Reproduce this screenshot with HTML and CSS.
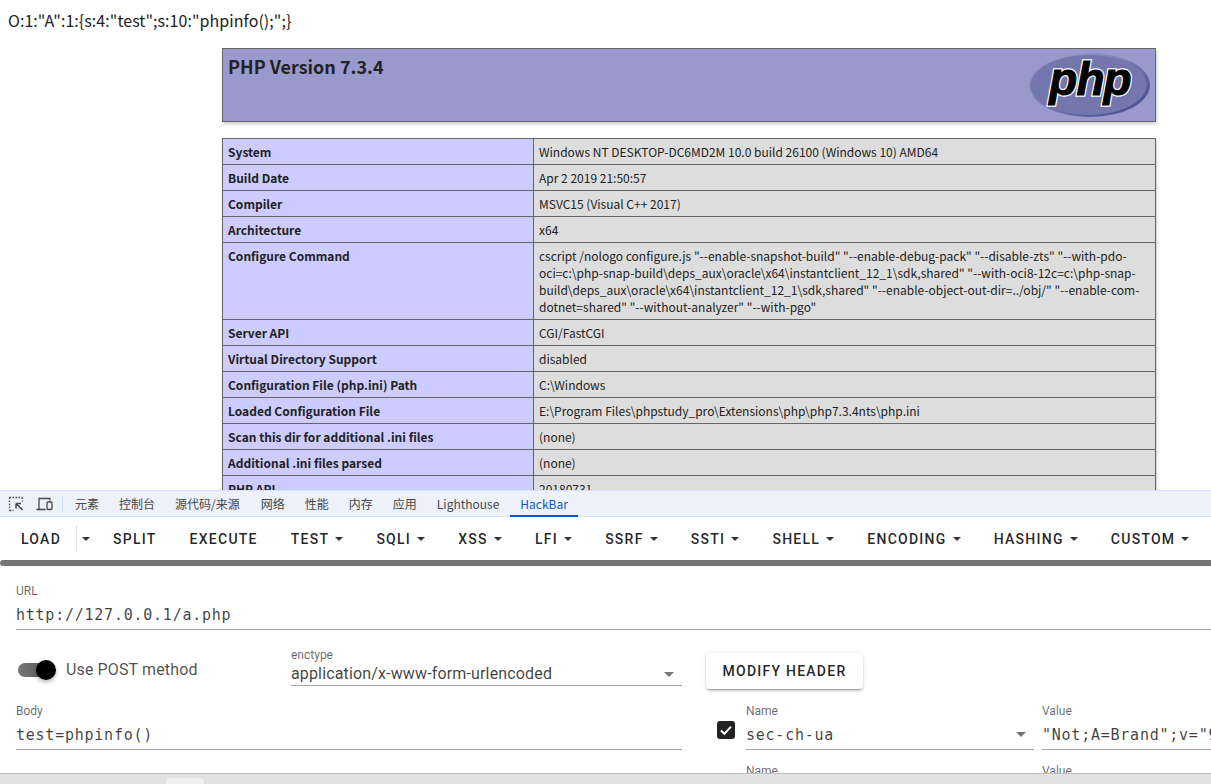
FILE: index.html
```html
<!DOCTYPE html>
<html lang="en">
<head>
  <meta charset="UTF-8" />
  <title>a.php</title>
  <link rel="stylesheet" href="styles.css">
</head>
<body>
  <div class="page">
    <div class="output">O:1:"A":1:{s:4:"test";s:10:"phpinfo();";}</div>
    <div class="phpinfo">
      <div class="php-head">
        <h1>PHP Version 7.3.4</h1>
        <svg class="php-logo" width="121" height="64" viewBox="0 0 121 64">
          <defs>
            <linearGradient id="oval" x1="0" y1="0" x2="1" y2="1">
              <stop offset="0" stop-color="#a3a6ce"/>
              <stop offset="0.5" stop-color="#7478b0"/>
              <stop offset="1" stop-color="#3f4288"/>
            </linearGradient>
          </defs>
          <ellipse cx="60.5" cy="32" rx="60.5" ry="32" fill="url(#oval)"/>
          <ellipse cx="59.5" cy="32" rx="58" ry="30" fill="#7377ae"/>
          <text class="php-word php-edge" x="61" y="42">php</text>
          <text class="php-word" x="61" y="42">php</text>
        </svg>
      </div>
      <table class="info">
        <tr><th>System</th><td>Windows NT DESKTOP-DC6MD2M 10.0 build 26100 (Windows 10) AMD64</td></tr>
        <tr><th>Build Date</th><td>Apr 2 2019 21:50:57</td></tr>
        <tr><th>Compiler</th><td>MSVC15 (Visual C++ 2017)</td></tr>
        <tr><th>Architecture</th><td>x64</td></tr>
        <tr class="tall"><th>Configure Command</th><td>cscript /nologo configure.js "--enable-snapshot-build" "--enable-debug-pack" "--disable-zts" "--with-pdo-oci=c:\php-snap-build\deps_aux\oracle\x64\instantclient_12_1\sdk,shared" "--with-oci8-12c=c:\php-snap-build\deps_aux\oracle\x64\instantclient_12_1\sdk,shared" "--enable-object-out-dir=../obj/" "--enable-com-dotnet=shared" "--without-analyzer" "--with-pgo"</td></tr>
        <tr><th>Server API</th><td>CGI/FastCGI</td></tr>
        <tr><th>Virtual Directory Support</th><td>disabled</td></tr>
        <tr><th>Configuration File (php.ini) Path</th><td>C:\Windows</td></tr>
        <tr><th>Loaded Configuration File</th><td>E:\Program Files\phpstudy_pro\Extensions\php\php7.3.4nts\php.ini</td></tr>
        <tr><th>Scan this dir for additional .ini files</th><td>(none)</td></tr>
        <tr><th>Additional .ini files parsed</th><td>(none)</td></tr>
        <tr><th>PHP API</th><td>20180731</td></tr>
      </table>
    </div>
  </div>

  <div class="devtools">
    <div class="tabs">
      <svg class="tool-icon" width="16" height="16" viewBox="0 0 16 16" fill="none" stroke="#474747" stroke-width="1.3">
        <path d="M1.5 1.5h13M1.5 1.5v13M14.5 1.5v4M1.5 14.5h4" stroke-dasharray="1.6 1.4"/>
        <path d="M8 7.5h5M8 7.5v5M8 7.5l6.5 6.5" stroke-width="1.5"/>
      </svg>
      <svg class="tool-icon" width="17" height="16" viewBox="0 0 17 16" fill="none" stroke="#474747" stroke-width="1.3">
        <path d="M3 13V2.5h11v2"/>
        <path d="M0.5 13.5h9" stroke-width="1.6"/>
        <rect x="11" y="6" width="5" height="7.5" rx="1"/>
      </svg>
      <span class="tab-sep"></span>
      <span class="tab">元素</span>
      <span class="tab">控制台</span>
      <span class="tab wide">源代码/来源</span>
      <span class="tab">网络</span>
      <span class="tab">性能</span>
      <span class="tab">内存</span>
      <span class="tab">应用</span>
      <span class="tab last">Lighthouse</span>
      <span class="tab active">HackBar</span>
    </div>

    <div class="toolbar">
      <span class="btn">Load</span>
      <span class="btn-split"><i class="caret"></i></span>
      <span class="btn">Split</span>
      <span class="btn">Execute</span>
      <span class="btn menu">Test<i class="caret"></i></span>
      <span class="btn menu">SQLi<i class="caret"></i></span>
      <span class="btn menu">XSS<i class="caret"></i></span>
      <span class="btn menu">LFI<i class="caret"></i></span>
      <span class="btn menu">SSRF<i class="caret"></i></span>
      <span class="btn menu">SSTI<i class="caret"></i></span>
      <span class="btn menu">Shell<i class="caret"></i></span>
      <span class="btn menu">Encoding<i class="caret"></i></span>
      <span class="btn menu">Hashing<i class="caret"></i></span>
      <span class="btn menu">Custom<i class="caret"></i></span>
    </div>
    <div class="resizer"></div>

    <div class="form">
      <div class="field url-field">
        <label>URL</label>
        <div class="value mono">http://127.0.0.1/a.php</div>
      </div>

      <div class="form-row">
        <div class="left-col">
          <div class="post-row">
            <div class="switch"><span class="thumb"></span></div>
            <span class="switch-label">Use POST method</span>
            <div class="field enctype">
              <label>enctype</label>
              <div class="value">application/x-www-form-urlencoded<i class="caret grey"></i></div>
            </div>
          </div>
          <div class="field body-field">
            <label>Body</label>
            <div class="value mono">test=phpinfo()</div>
          </div>
        </div>

        <div class="right-col">
          <button class="modify">Modify Header</button>
          <div class="header-row">
            <span class="checkbox">
              <svg width="18" height="18" viewBox="0 0 18 18" fill="none" stroke="#fff" stroke-width="2"><path d="M4 9.5l3.4 3.4L14 5.6"/></svg>
            </span>
            <div class="field name">
              <label>Name</label>
              <div class="value mono">sec-ch-ua<i class="caret grey"></i></div>
            </div>
            <div class="field val">
              <label>Value</label>
              <div class="value mono">"Not;A=Brand";v="99", "Google Chrome";v="139"</div>
            </div>
          </div>
          <div class="header-row next">
            <div class="field name">
              <label>Name</label>
            </div>
            <div class="field val">
              <label>Value</label>
            </div>
          </div>
        </div>
      </div>
    </div>
  </div>

  <div class="tabstrip"><span class="strip-tab"></span></div>
</body>
</html>
```

FILE: styles.css
```css
* { box-sizing: border-box; }
html, body {
  margin: 0;
  padding: 0;
  height: 784px;
  overflow: hidden;
  background: #fff;
}
body {
  display: flex;
  flex-direction: column;
  font-family: Roboto, sans-serif;
}

/* page above the devtools */
.page {
  height: 490px;
  flex: none;
  overflow: hidden;
  padding: 9px 0 0 8px;
  font-family: "Noto Sans CJK SC", "Noto Sans", sans-serif;
  color: #222;
}
.output {
  font-size: 16px;
  line-height: 23px;
  letter-spacing: 0.05px;
}
.phpinfo {
  width: 934px;
  margin: 16px 0 0 214px;
}
.php-head {
  height: 74px;
  background: #99c;
  border: 1px solid #666;
  box-shadow: 1px 2px 3px #ccc;
  padding: 0 5px;
  display: flex;
  justify-content: space-between;
  align-items: flex-start;
}
.php-head h1 {
  margin: 4px 0 0;
  font-size: 18px;
  line-height: 26px;
  font-weight: 700;
}
.php-logo {
  margin: 4px 0 0;
}
.php-word {
  font-family: "Liberation Sans", sans-serif;
  font-size: 46px;
  font-weight: 700;
  font-style: italic;
  letter-spacing: -1px;
  text-anchor: middle;
  fill: #000;
  stroke: #000;
  stroke-width: 1px;
}
.php-edge {
  stroke: #fff;
  stroke-width: 3.5px;
}
.info {
  width: 934px;
  margin-top: 16px;
  border-collapse: collapse;
  table-layout: fixed;
  font-size: 12px;
  box-shadow: 1px 2px 3px #ccc;
}
.info th, .info td {
  border: 1px solid #666;
  padding: 4px 5px;
  height: 26px;
  line-height: 17px;
  text-align: left;
  vertical-align: baseline;
  word-break: break-word;
}
.info th {
  width: 311px;
  background: #ccf;
  font-weight: 700;
}
.info td {
  background: #ddd;
}
.info .tall th, .info .tall td {
  height: 77px;
}

/* devtools tab strip */
.devtools {
  height: 283px;
  overflow: hidden;
  background: #fff;
  flex: none;
}
.tabs {
  height: 27px;
  background: #edf1fa;
  border-top: 1px solid #d3e3fd;
  border-bottom: 1px solid #d3e3fd;
  display: flex;
  align-items: center;
  padding-left: 8px;
  font-family: "Noto Sans CJK SC", sans-serif;
  font-size: 12px;
  color: #474747;
}
.tool-icon {
  margin-right: 12px;
}
.tab-sep {
  width: 1px;
  height: 16px;
  background: #d3e3fd;
  margin: 0 4px 0 -3px;
}
.tab {
  padding: 0 8px;
  line-height: 25px;
  margin-right: 4px;
}
.tab.wide {
  margin-right: 5px;
}
.tab.last {
  margin-right: 3px;
}
.tab.active {
  align-self: flex-start;
  color: #0b57d0;
  border-bottom: 2px solid #0b57d0;
  height: 26px;
  line-height: 26px;
  padding: 0 10px;
}

/* hackbar buttons */
.toolbar {
  height: 43px;
  display: flex;
  align-items: center;
  gap: 1px;
  padding-left: 5px;
}
.btn {
  display: flex;
  align-items: center;
  padding: 0 16px;
  height: 36px;
  font-size: 14px;
  font-weight: 500;
  letter-spacing: 1.25px;
  text-transform: uppercase;
  color: rgba(0, 0, 0, 0.87);
  white-space: nowrap;
}
.btn-split {
  height: 26px;
  width: 20px;
  margin-left: -2px;
  border-left: 1px solid #ddd;
  display: flex;
  align-items: center;
  padding-left: 5px;
}
.btn.menu {
  padding-right: 16.2px;
}
.caret {
  display: inline-block;
  width: 0;
  height: 0;
  border-left: 4px solid transparent;
  border-right: 4px solid transparent;
  border-top: 4px solid #333;
}
.btn .caret {
  margin-left: 6px;
}
.caret.grey {
  border-left-width: 5px;
  border-right-width: 5px;
  border-top: 5px solid #757575;
  position: absolute;
  right: 8px;
  top: 9px;
}
.resizer {
  height: 6px;
  background: #757575;
  border-radius: 3px 0 0 3px;
}

/* form */
.form {
  padding: 0 0 0 16px;
}
.field {
  position: relative;
}
.field label {
  display: block;
  font-size: 12px;
  line-height: 16px;
  color: rgba(0, 0, 0, 0.6);
}
.value {
  position: relative;
  height: 31px;
  line-height: 31px;
  border-bottom: 1px solid #a5a5a5;
  font-size: 16px;
  letter-spacing: 0.15px;
  color: rgba(0, 0, 0, 0.75);
  white-space: nowrap;
  overflow: hidden;
}
.mono {
  font-family: "DejaVu Sans Mono", monospace;
  font-size: 15px;
  line-height: 33px;
  letter-spacing: 0.76px;
}
.url-field {
  margin-top: 17px;
}
.form-row {
  display: flex;
  margin-top: 16px;
}
.left-col {
  width: 666px;
  flex: none;
}
.post-row {
  display: flex;
  align-items: flex-start;
  height: 57px;
}
.switch {
  position: relative;
  width: 34px;
  height: 14px;
  margin: 17px 0 0 2px;
  border-radius: 7px;
  background: linear-gradient(90deg, #777, #555);
  flex: none;
}
.thumb {
  position: absolute;
  right: -4px;
  top: -3px;
  width: 20px;
  height: 20px;
  border-radius: 50%;
  background: #000;
  box-shadow: 0 2px 4px rgba(0, 0, 0, 0.3);
}
.switch-label {
  width: 225px;
  margin: 13px 0 0 14px;
  font-size: 16px;
  line-height: 22px;
  letter-spacing: 0.13px;
  color: rgba(0, 0, 0, 0.7);
  flex: none;
}
.enctype {
  flex: 1;
  margin-top: 1px;
}
.enctype .value {
  height: 23px;
  line-height: 21px;
}
.right-col {
  flex: 1;
  min-width: 0;
  margin-top: 7px;
  padding-left: 24px;
}
.modify {
  display: block;
  width: 157px;
  height: 36px;
  margin: 0;
  border: none;
  border-radius: 4px;
  background: #fff;
  box-shadow: 0 3px 1px -2px rgba(0,0,0,.2), 0 2px 2px 0 rgba(0,0,0,.14), 0 1px 5px 0 rgba(0,0,0,.12);
  font-family: Roboto, sans-serif;
  font-size: 14px;
  font-weight: 500;
  letter-spacing: 1.25px;
  text-transform: uppercase;
  color: rgba(0, 0, 0, 0.87);
}
.header-row {
  display: flex;
  margin-top: 14px;
  padding-left: 40px;
  position: relative;
}
.header-row.next {
  margin-top: 13px;
}
.checkbox {
  position: absolute;
  left: 11px;
  top: 18px;
  width: 18px;
  height: 18px;
  border-radius: 3px;
  background: #222;
  display: flex;
}
.name {
  width: 288px;
  flex: none;
}
.name .caret.grey {
  right: 8px;
  top: 13px;
}
.val {
  flex: 1;
  min-width: 0;
  margin-left: 8px;
}

/* bottom strip */
.tabstrip {
  height: 11px;
  flex: none;
  overflow: hidden;
  background: #e2e2e2;
  border-top: 1px solid #bdbdbd;
  padding: 4px 0 0 166px;
}
.strip-tab {
  display: block;
  width: 38px;
  height: 6px;
  background: #f0f0f0;
  border-radius: 4px 4px 0 0;
}
```
